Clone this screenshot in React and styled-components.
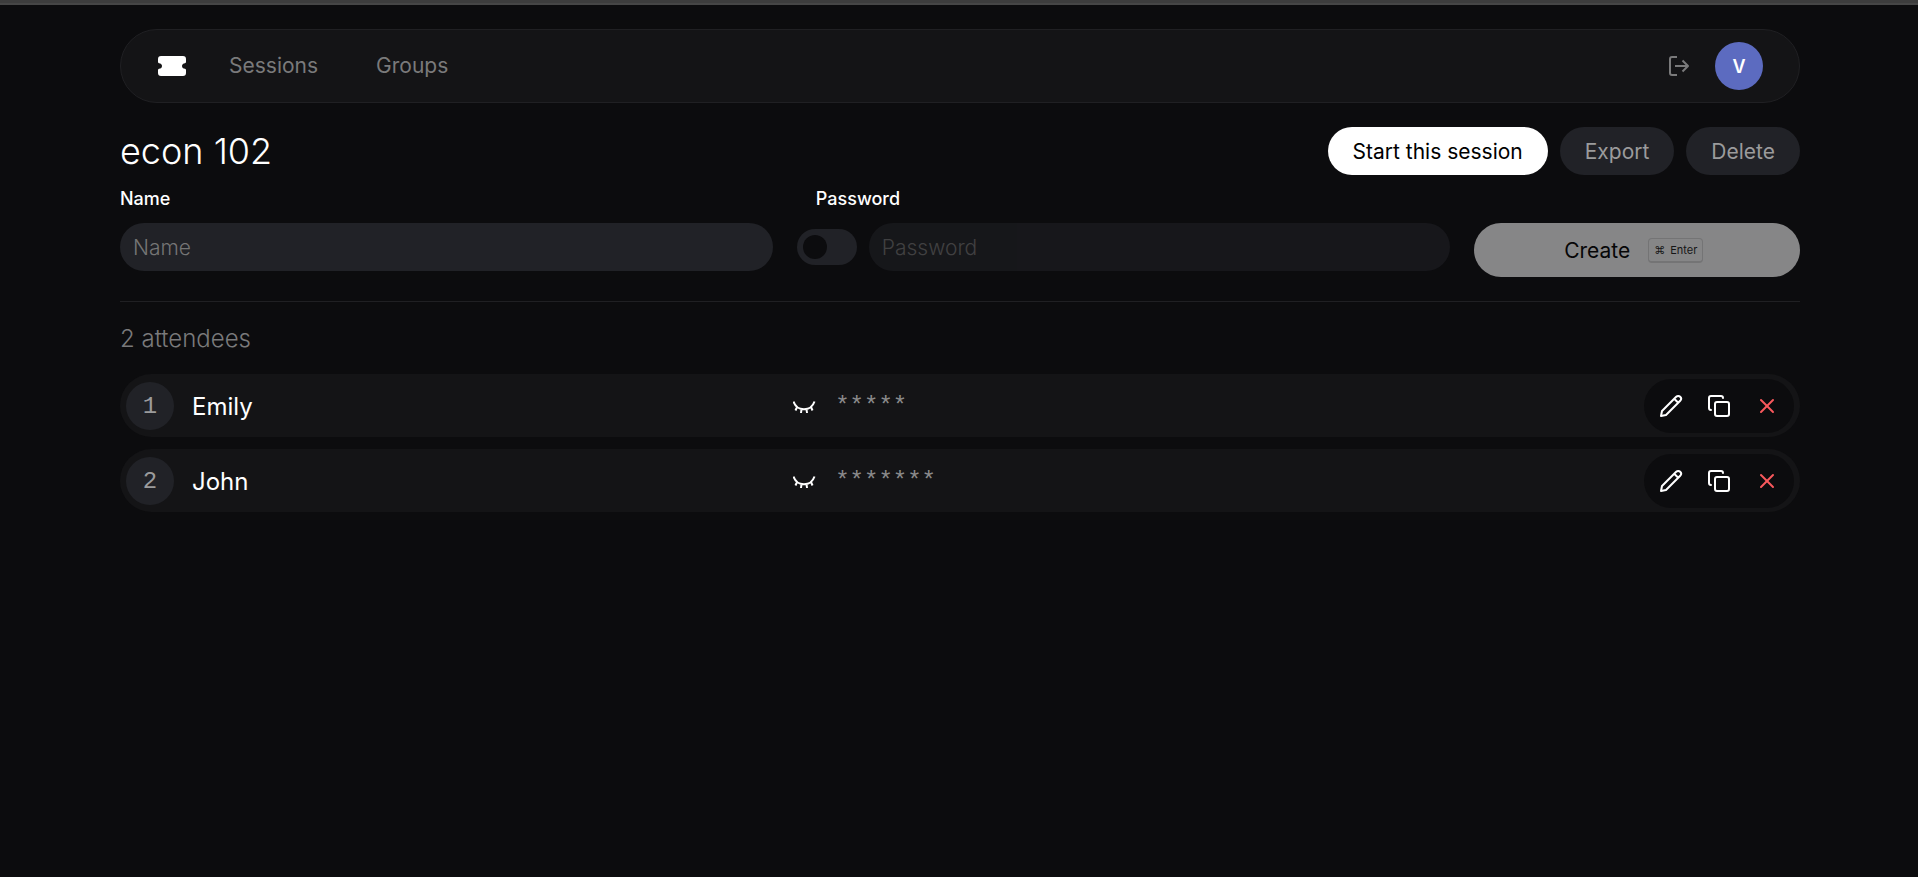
import React, { useState } from 'react'
import styled, { createGlobalStyle } from 'styled-components'
import { Copy, X } from 'lucide-react'

const GlobalStyle = createGlobalStyle`
  *, *::before, *::after {
    box-sizing: border-box;
  }
  body {
    margin: 0;
    background: #0c0c0e;
    color: #fff;
    font-family: 'Inter', sans-serif;
    font-size: 21px;
  }
  button, input {
    font-family: inherit;
    border: none;
    outline: none;
  }
  svg {
    display: block;
    flex: none;
  }
`

const TopEdge = styled.div`
  height: 5px;
  background: #3d3d3d;
  border-bottom: 2px solid #464646;
`

const Page = styled.div`
  padding: 24px 118px 24px 120px;
  display: flex;
  flex-direction: column;
  gap: 24px;
`

const Header = styled.header`
  display: flex;
  align-items: center;
  justify-content: space-between;
  height: 74px;
  padding: 0 36px;
  background: #141416;
  border: 1px solid #202023;
  border-radius: 37px;
`

const Nav = styled.nav`
  display: flex;
  align-items: center;
  gap: 58px;
`

const Brand = styled.a`
  display: flex;
  color: #fff;
  padding: 0 1px;
`

const NavGroup = styled.div`
  display: flex;
  align-items: center;
  gap: 42px;
`

const NavLink = styled.a`
  color: #7a7a7b;
  font-size: 21px;
  line-height: 24px;
  text-decoration: none;
`

const Account = styled.div`
  display: flex;
  align-items: center;
  gap: 24px;
`

const IconButton = styled.button`
  display: flex;
  align-items: center;
  justify-content: center;
  width: ${props => props.$size || 24}px;
  height: ${props => props.$size || 24}px;
  padding: 0;
  background: none;
  color: ${props => props.$color || '#fff'};
  cursor: pointer;
`

const Avatar = styled.div`
  display: flex;
  align-items: center;
  justify-content: center;
  width: 48px;
  height: 48px;
  border-radius: 50%;
  background: #5c6bc0;
  font-size: 18px;
  font-weight: 600;
`

const Main = styled.main`
  display: flex;
  flex-direction: column;
`

const TitleBar = styled.div`
  display: flex;
  align-items: center;
  justify-content: space-between;
`

const Title = styled.h1`
  margin: 0;
  font-size: 36px;
  line-height: 48px;
  font-weight: 300;
`

const Actions = styled.div`
  display: flex;
  gap: 12px;
`

const Button = styled.button`
  height: 48px;
  padding: 0 25px;
  border-radius: 24px;
  font-size: 21px;
  background: ${props => props.$primary ? '#fff' : '#212227'};
  color: ${props => props.$primary ? '#000' : '#9b9b9c'};
  cursor: pointer;
`

const Form = styled.form`
  display: grid;
  grid-template-columns: 2fr 2fr 1fr;
  gap: 24px;
  align-items: start;
  padding-bottom: 24px;
  border-bottom: 1px solid #202023;
`

const Field = styled.div`
  display: flex;
  flex-direction: column;
  min-width: 0;
`

const Label = styled.label`
  padding: 12px 0 12px ${props => props.$inset ? 19 : 0}px;
  font-size: 18px;
  line-height: 24px;
  font-weight: 500;
`

const Controls = styled.div`
  display: flex;
  align-items: center;
  gap: 12px;
`

const Input = styled.input`
  flex: 1;
  width: 100%;
  min-width: 0;
  height: 48px;
  min-height: 48px;
  padding: 0 13px;
  border-radius: 24px;
  background: #212227;
  color: #fff;
  font-size: 21px;
  font-weight: 300;
  &::placeholder {
    color: #757575;
    opacity: 1;
  }
  &:disabled {
    opacity: 0.5;
  }
`

const Toggle = styled.input`
  appearance: none;
  display: flex;
  align-items: center;
  flex: none;
  width: 60px;
  height: 36px;
  margin: 0;
  padding: 0 6px;
  border-radius: 18px;
  background: #212227;
  cursor: pointer;
  &::before {
    content: '';
    width: 24px;
    height: 24px;
    border-radius: 50%;
    background: #0c0c0e;
  }
  &:checked {
    justify-content: flex-end;
  }
`

const CreateButton = styled.button`
  display: flex;
  align-items: center;
  justify-content: center;
  gap: 18px;
  height: 54px;
  margin-top: 48px;
  padding: 0 12px 0 6px;
  border-radius: 27px;
  background: #868687;
  color: #060607;
  font-size: 21px;
`

const Kbd = styled.kbd`
  display: flex;
  align-items: center;
  gap: 5px;
  height: 25px;
  padding: 0 5px;
  border: 1px solid #747475;
  border-bottom-width: 2px;
  border-radius: 4px;
  font-family: inherit;
  font-size: 11px;
  color: #161617;
`

const Count = styled.h2`
  margin: 0;
  padding: 24px 0 22px;
  font-size: 24px;
  line-height: 26px;
  font-weight: 300;
  color: #7a7a7b;
`

const List = styled.ul`
  display: flex;
  flex-direction: column;
  gap: 12px;
  margin: 0;
  padding: 0;
  list-style: none;
`

const Row = styled.li`
  display: grid;
  grid-template-columns: 2fr 2fr 1fr;
  align-items: center;
  padding: 5px 6px 4px;
  border-radius: 32px;
  background: #141416;
`

const Cell = styled.div`
  display: flex;
  align-items: center;
  gap: 18px;
  font-size: 24px;
`

const Index = styled.span`
  display: flex;
  align-items: center;
  justify-content: center;
  width: 48px;
  height: 48px;
  border-radius: 50%;
  background: #212227;
  color: #9b9b9c;
  font-family: 'Liberation Mono', monospace;
`

const Secret = styled.span`
  padding-top: 2px;
  color: #8a8a8b;
  font-family: 'Liberation Mono', monospace;
  line-height: 24px;
`

const Tools = styled.div`
  display: flex;
  justify-self: end;
  padding: 3px;
  border-radius: 27px;
  background: #0c0c0e;
`

const Ticket = () => (
  <svg width="28" height="20" viewBox="0 0 28 20" fill="currentColor">
    <path d="M3 0H25A3 3 0 0 1 28 3V6Q28 7 27 7.2Q24 7.600 24 10Q24 12.400 27 12.800Q28 13 28 14V17A3 3 0 0 1 25 20H3A3 3 0 0 1 0 17V14Q0 13 1 12.800Q4 12.400 4 10Q4 7.600 1 7.200Q0 7 0 6V3A3 3 0 0 1 3 0Z" />
  </svg>
)

const Stroke = ({ children }) => (
  <svg width="24" height="24" viewBox="0 0 24 24" fill="none" stroke="currentColor" strokeWidth="2" strokeLinejoin="round">
    {children}
  </svg>
)

const LogOut = () => (
  <Stroke>
    <path d="M10 3H5a2 2 0 0 0-2 2v14a2 2 0 0 0 2 2h5M8 12h13M15.500 6.500L21 12l-5.500 5.500" />
  </Stroke>
)

const EyeClosed = () => (
  <Stroke>
    <path d="M0.500 7.500C4 17.800 18 17.800 21.500 7.500M4 13L2.500 16.500M8.500 15L8 19M13.500 15L14 19M18 13L19.500 16.500" />
  </Stroke>
)

const Pencil = () => (
  <Stroke>
    <path d="M2 22L3 17L17.200 2.800A2.800 2.800 0 0 1 21.200 6.800L7 21ZM15.200 4.800L19.200 8.800" />
  </Stroke>
)

const attendees = [
  { name: 'Emily', password: '*****' },
  { name: 'John', password: '*******' },
]

const Attendee = ({ index, name, password }) => (
  <Row>
    <Cell>
      <Index>{index}</Index>
      <span>{name}</span>
    </Cell>
    <Cell>
      <IconButton type="button" aria-label="Show password"><EyeClosed /></IconButton>
      <Secret>{password}</Secret>
    </Cell>
    <Tools>
      <IconButton type="button" $size={48} aria-label="Edit"><Pencil /></IconButton>
      <IconButton type="button" $size={48} aria-label="Copy"><Copy size={24} /></IconButton>
      <IconButton type="button" $size={48} $color="#f9595d" aria-label="Remove"><X size={24} /></IconButton>
    </Tools>
  </Row>
)

const App = () => {
  const [name, setName] = useState('')
  const [locked, setLocked] = useState(false)

  return (
    <>
      <GlobalStyle />
      <TopEdge />
      <Page>
        <Header>
          <NavGroup>
            <Brand href="#" aria-label="Home"><Ticket /></Brand>
            <Nav>
              <NavLink href="#sessions">Sessions</NavLink>
              <NavLink href="#groups">Groups</NavLink>
            </Nav>
          </NavGroup>
          <Account>
            <IconButton type="button" $color="#7a7a7b" aria-label="Log out"><LogOut /></IconButton>
            <Avatar>V</Avatar>
          </Account>
        </Header>
        <Main>
          <TitleBar>
            <Title>econ 102</Title>
            <Actions>
              <Button type="button" $primary>Start this session</Button>
              <Button type="button">Export</Button>
              <Button type="button">Delete</Button>
            </Actions>
          </TitleBar>
          <Form onSubmit={e => e.preventDefault()}>
            <Field>
              <Label htmlFor="name">Name</Label>
              <Input id="name" placeholder="Name" value={name} onChange={e => setName(e.target.value)} />
            </Field>
            <Field>
              <Label htmlFor="password" $inset>Password</Label>
              <Controls>
                <Toggle type="checkbox" aria-label="Use a password" checked={locked} onChange={() => setLocked(!locked)} />
                <Input id="password" placeholder="Password" disabled={!locked} />
              </Controls>
            </Field>
            <CreateButton type="submit" disabled={!name}>
              Create
              <Kbd><span>⌘</span><span>Enter</span></Kbd>
            </CreateButton>
          </Form>
          <Count>{attendees.length} attendees</Count>
          <List>
            {attendees.map((a, i) => (
              <Attendee key={a.name} index={i + 1} {...a} />
            ))}
          </List>
        </Main>
      </Page>
    </>
  )
}

export default App
